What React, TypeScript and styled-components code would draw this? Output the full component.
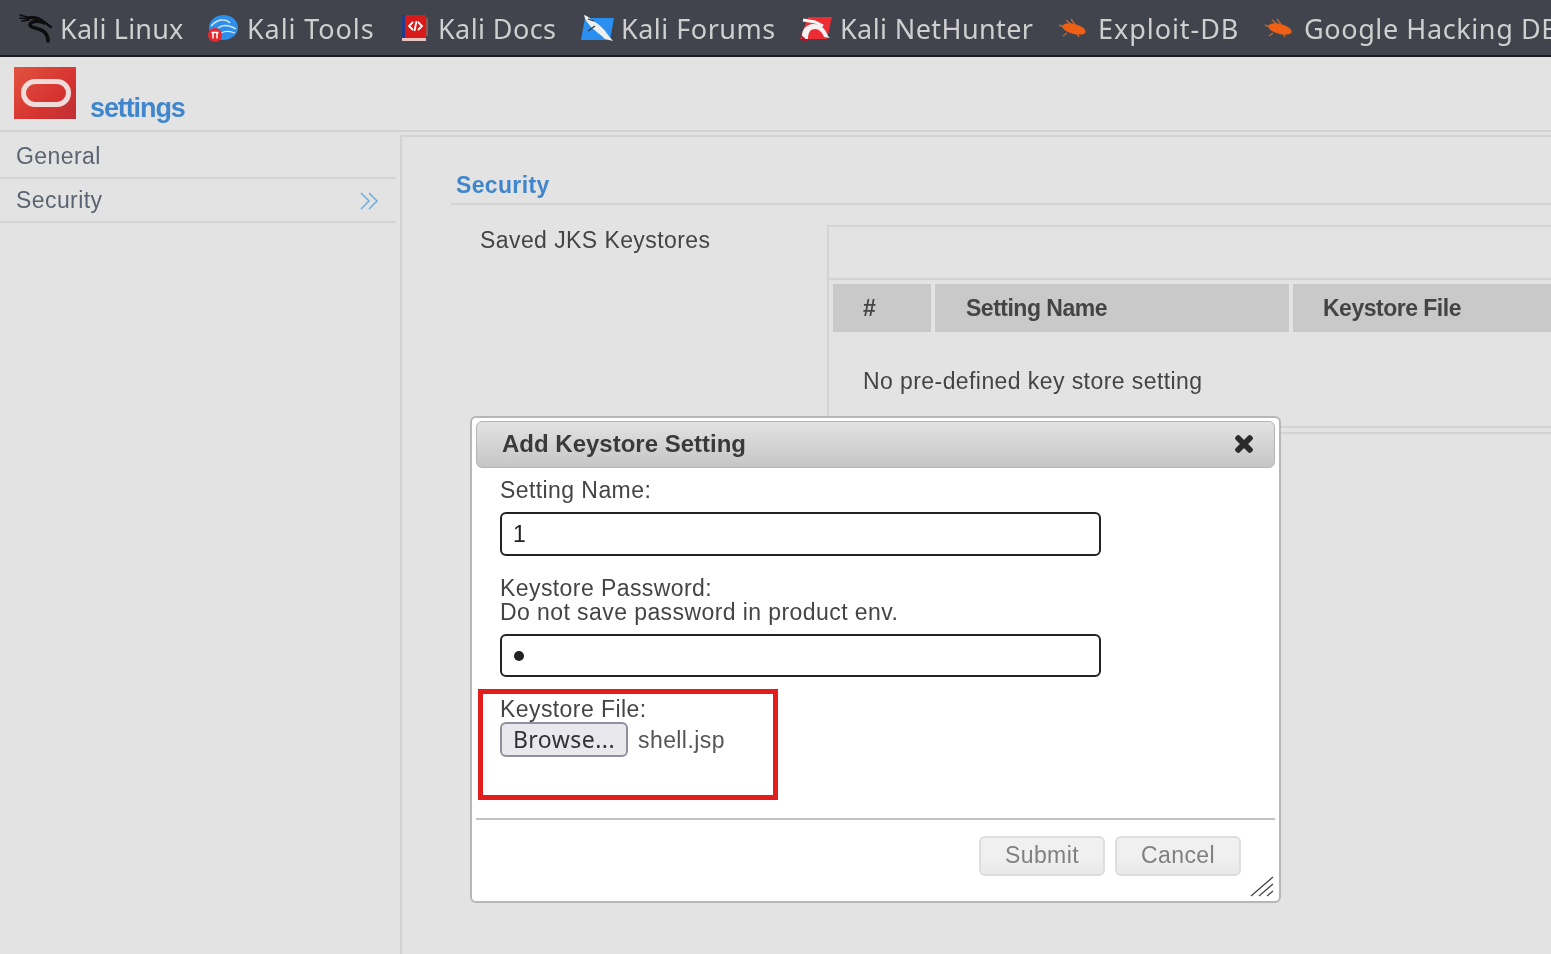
import React from "react";
import styled, { createGlobalStyle } from "styled-components";
import { FaTimes } from "react-icons/fa";

const Global = createGlobalStyle`
  html, body { margin: 0; padding: 0; height: 100%; background: #e3e3e3; overflow: hidden; }
  #root { height: 100%; }
  * { box-sizing: border-box; }
`;

const Page = styled.div`
  position: relative;
  width: 1551px;
  height: 954px;
  overflow: hidden;
  display: flex;
  flex-direction: column;
  background: #e3e3e3;
  font-family: "Liberation Sans", Arial, sans-serif;
  font-size: 23px;
  letter-spacing: 0.42px;
  color: #444;
  filter: blur(0.7px);
`;

const Toolbar = styled.nav`
  height: 57px;
  flex: none;
  display: flex;
  align-items: center;
  padding: 1px 0 0 19px;
  background: #41444c;
  border-bottom: 2px solid #1c1d21;
  white-space: nowrap;
`;

const Bookmark = styled.a<{ $gap: number; $track: number; $w?: number }>`
  flex: none;
  display: flex;
  align-items: center;
  width: ${(p) => (p.$w ? `${p.$w}px` : "auto")};
  gap: ${(p) => p.$gap}px;
  font-family: "Noto Sans", "Open Sans", sans-serif;
  font-size: 27px;
  letter-spacing: ${(p) => p.$track}px;
  color: #cfcfcf;
`;

const Header = styled.header`
  height: 75px;
  flex: none;
  display: flex;
  align-items: flex-end;
  gap: 14px;
  padding: 0 0 7px 14px;
  border-bottom: 2px solid #d3d3d3;
`;

const Logo = styled.div`
  width: 62px;
  height: 52px;
  display: flex;
  align-items: center;
  justify-content: center;
  margin-bottom: 4px;
  background: linear-gradient(135deg, #e2533f 0%, #d63431 60%, #bf2f33 100%);
`;

const LogoOval = styled.div`
  width: 50px;
  height: 28px;
  margin-top: -1px;
  margin-left: 1px;
  border: 5px solid #efdcd8;
  border-radius: 15px;
`;

const AppTitle = styled.div`
  font-size: 27px;
  line-height: 30px;
  font-weight: 700;
  letter-spacing: -1.1px;
  color: #3f86cc;
`;

const Body = styled.div`
  flex: 1;
  display: flex;
  min-height: 0;
`;

const Sidebar = styled.aside`
  width: 396px;
  flex: none;
  margin-right: 4px;
`;

const NavRow = styled.div<{ $h: number; $pt: number }>`
  height: ${(p) => p.$h}px;
  display: flex;
  align-items: center;
  justify-content: space-between;
  padding: ${(p) => p.$pt}px 16px 0 16px;
  border-bottom: 2px solid #d3d3d3;
  color: #5b6472;
`;

const Content = styled.main`
  flex: 1;
  margin-top: 3px;
  padding: 24px 0 0 49px;
  border-left: 2px solid #d3d3d3;
  border-top: 2px solid #d3d3d3;
  min-width: 0;
`;

const SectionTitle = styled.h2`
  margin: 0;
  height: 44px;
  padding: 0 0 0 5px;
  line-height: 48px;
  font-size: 23px;
  font-weight: 700;
  letter-spacing: 0.35px;
  color: #3f86cc;
  border-bottom: 2px solid #d3d3d3;
`;

const FormRow = styled.div`
  display: flex;
  padding-top: 20px;
`;

const FieldLabel = styled.div`
  width: 376px;
  flex: none;
  padding: 2px 0 0 29px;
  line-height: 26px;
  color: #444;
`;

const TableBox = styled.div`
  flex: 1;
  height: 203px;
  border-left: 2px solid #d3d3d3;
  border-top: 2px solid #d3d3d3;
  border-bottom: 2px solid #d3d3d3;
  box-shadow: 0 4px 0 #e3e3e3, 0 6px 0 #d3d3d3;
`;

const TableCaption = styled.div`
  height: 53px;
  border-bottom: 2px solid #d3d3d3;
`;

const HeadRow = styled.div`
  display: grid;
  grid-template-columns: 98px 354px 1fr;
  gap: 4px;
  height: 48px;
  margin: 4px 0 0 4px;
`;

const HeadCell = styled.div<{ $pl: number }>`
  display: flex;
  align-items: center;
  padding-left: ${(p) => p.$pl}px;
  background: #c9c9c9;
  font-weight: 700;
  letter-spacing: -0.5px;
  color: #444;
`;

const EmptyText = styled.div`
  padding: 36px 0 0 34px;
  line-height: 26px;
  color: #444;
`;

const Modal = styled.section`
  position: absolute;
  left: 470px;
  top: 416px;
  width: 811px;
  height: 487px;
  display: flex;
  flex-direction: column;
  padding: 3px 4px 0;
  background: #fff;
  border: 2px solid #b7b7b7;
  border-radius: 6px;
`;

const ModalBar = styled.div`
  height: 47px;
  flex: none;
  display: flex;
  align-items: center;
  justify-content: space-between;
  padding: 0 18px 2px 25px;
  background: linear-gradient(#e2e2e2, #c6c6c6);
  border: 1px solid #b4b4b4;
  border-radius: 6px;
  font-size: 24px;
  font-weight: 700;
  letter-spacing: 0;
  color: #3a3a3a;
`;

const CloseGlyph = styled(FaTimes)`
  width: 24px;
  height: 24px;
  color: #2b2b2b;
  stroke: #2b2b2b;
  stroke-width: 30px;
`;

const ModalForm = styled.div`
  flex: 1;
  padding: 10px 0 0 24px;
  line-height: 24px;
  color: #444;
`;

const TextField = styled.div<{ $mt: number; $h: number }>`
  width: 601px;
  height: ${(p) => p.$h}px;
  margin-top: ${(p) => p.$mt}px;
  display: flex;
  align-items: center;
  padding-left: 11px;
  border: 2px solid #222;
  border-radius: 6px;
  color: #222;
`;

const Bullet = styled.span`
  width: 10px;
  height: 10px;
  border-radius: 50%;
  background: #222;
  margin-left: 1px;
`;

const LabelBlock = styled.div<{ $mt: number }>`
  margin-top: ${(p) => p.$mt}px;
`;

const FileRow = styled.div`
  display: flex;
  align-items: center;
  gap: 10px;
  margin-top: 1px;
`;

const BrowseButton = styled.div`
  width: 128px;
  height: 35px;
  display: flex;
  align-items: center;
  justify-content: center;
  padding-bottom: 1px;
  background: #e9e9ed;
  border: 2px solid #8f8f9d;
  border-radius: 6px;
  font-family: "Noto Sans", sans-serif;
  font-size: 23px;
  letter-spacing: 0.45px;
  color: #333;
`;

const FileName = styled.span`
  color: #555;
`;

const Footer = styled.div`
  position: relative;
  height: 83px;
  flex: none;
  display: flex;
  justify-content: flex-end;
  gap: 10px;
  padding: 16px 34px 0 0;
  border-top: 2px solid #c2c2c2;
`;

const FootButton = styled.div`
  width: 126px;
  height: 40px;
  display: flex;
  align-items: center;
  justify-content: center;
  padding-bottom: 2px;
  background: linear-gradient(#f0f0f0 50%, #e9e9e9);
  border: 2px solid #dedede;
  border-radius: 6px;
  color: #808080;
`;

const ResizeGrip = styled.svg`
  position: absolute;
  right: 1px;
  bottom: 4px;
  width: 24px;
  height: 21px;
`;

const RedFrame = styled.div`
  position: absolute;
  left: 6px;
  top: 271px;
  width: 300px;
  height: 111px;
  border: 5px solid #e31c1c;
`;

const KaliIcon = () => (
  <svg width="33" height="30" viewBox="0 0 33 30" fill="none" stroke="#0d0d0d" strokeLinecap="round">
    <path d="M1 2l10 3M1 5l9 1M3 8l7-1" strokeWidth="1.7" />
    <path d="M8 5c7-1 13 0 17 5" strokeWidth="3.2" />
    <path d="M23 9c-6-2-12 0-12 3 0 3 8 3 13 6 3 2 5 5 5 10" strokeWidth="3.6" />
    <path d="M25 9l7 5" strokeWidth="2.2" />
  </svg>
);

const ToolsIcon = () => (
  <svg width="30" height="28" viewBox="0 0 30 28">
    <ellipse cx="15.5" cy="13.5" rx="14.5" ry="12.5" fill="#2f8ee8" />
    <path d="M3 12c7-8 15-7 19-3M10 14c5-4 11-3 18 1M13 19c4-2 9-2 14 0" stroke="#d5ecff" strokeWidth="1.3" fill="none" />
    <circle cx="7" cy="21" r="7" fill="#e8262b" />
    <path d="M3.5 18.5h7M5 18.5v6M9 18.5v6" stroke="#fff" strokeWidth="1.5" />
  </svg>
);

const DocsIcon = () => (
  <svg width="27" height="28" viewBox="0 0 27 28">
    <rect x="1" y="1" width="3" height="25" fill="#1f3d8c" />
    <rect x="4" y="1" width="21" height="23" fill="#d81a1a" />
    <rect x="25" y="4" width="2" height="18" fill="#8a5a4a" />
    <rect x="1" y="24" width="24" height="3" fill="#e8c5c0" />
    <path d="M12 8l-4 4 4 4M17 8l4 4-4 4M15.5 7l-2 10" stroke="#fff" strokeWidth="1.8" fill="none" />
  </svg>
);

const ForumsIcon = () => (
  <svg width="33" height="27" viewBox="0 0 33 27">
    <path d="M4 3h29l-4 22H0z" fill="#2a8ff0" />
    <path d="M3 0c4 1 6 4 11 7 5 3 9 7 13 13l5 6-8-2c-5-5-10-8-14-12C8 9 4 6 3 0z" fill="#eef0ef" />
    <path d="M7 4l6 2M14 11l-7 5" stroke="#333" strokeWidth="1.3" />
  </svg>
);

const HunterIcon = () => (
  <svg width="32" height="28" viewBox="0 0 32 28">
    <path d="M8 3l24 0-5 22H0z" fill="#ee2c33" />
    <path d="M2 25c-1-8 3-15 12-15 6 0 11 4 14 12l2 2-6-1c-2-5-5-8-9-8-5 0-7 4-7 10z" fill="#f2f2f2" />
    <path d="M3 6l12 2 8 4" stroke="#f4f4f4" strokeWidth="3" fill="none" />
    <path d="M0 20l3 7h5z" fill="#b3122c" />
  </svg>
);

const BugIcon = () => (
  <svg width="31" height="22" viewBox="0 0 31 22">
    <path d="M9 3l7 6M14 2l5 7M10 16l-4 3M20 16l2 4M2 8l7 3" stroke="#b8673a" strokeWidth="1.5" />
    <ellipse cx="17" cy="12" rx="12" ry="5" transform="rotate(15 17 12)" fill="#ef5f14" />
  </svg>
);

const Chevrons = () => (
  <svg width="20" height="18" viewBox="0 0 20 18" fill="none" stroke="#6fb0e0" strokeWidth="1.6">
    <path d="M1 1l8 8-8 8M9 1l8 8-8 8" />
  </svg>
);

export default function App() {
  return (
    <Page>
      <Global />
      <Toolbar>
        <Bookmark $gap={8} $track={0.2} $w={189}><KaliIcon />Kali Linux</Bookmark>
        <Bookmark $gap={9} $track={0.9} $w={193}><ToolsIcon />Kali Tools</Bookmark>
        <Bookmark $gap={10} $track={0.4} $w={180}><DocsIcon />Kali Docs</Bookmark>
        <Bookmark $gap={7} $track={0.5} $w={219}><ForumsIcon />Kali Forums</Bookmark>
        <Bookmark $gap={8} $track={0.4} $w={257}><HunterIcon />Kali NetHunter</Bookmark>
        <Bookmark $gap={10} $track={0.95} $w={206}><BugIcon />Exploit-DB</Bookmark>
        <Bookmark $gap={10} $track={0.6}><BugIcon />Google Hacking DB</Bookmark>
      </Toolbar>
      <Header>
        <Logo><LogoOval /></Logo>
        <AppTitle>settings</AppTitle>
      </Header>
      <Body>
        <Sidebar>
          <NavRow $h={47} $pt={3}>General</NavRow>
          <NavRow $h={44} $pt={1}>Security<Chevrons /></NavRow>
        </Sidebar>
        <Content>
          <SectionTitle>Security</SectionTitle>
          <FormRow>
            <FieldLabel>Saved JKS Keystores</FieldLabel>
            <TableBox>
              <TableCaption />
              <HeadRow>
                <HeadCell $pl={30}>#</HeadCell>
                <HeadCell $pl={31}>Setting Name</HeadCell>
                <HeadCell $pl={30}>Keystore File</HeadCell>
              </HeadRow>
              <EmptyText>No pre-defined key store setting</EmptyText>
            </TableBox>
          </FormRow>
        </Content>
      </Body>
      <Modal>
        <ModalBar>
          Add Keystore Setting
          <CloseGlyph />
        </ModalBar>
        <ModalForm>
          <div>Setting Name:</div>
          <TextField $mt={10} $h={44}>1</TextField>
          <LabelBlock $mt={20}>
            Keystore Password:
            <br />
            Do not save password in product env.
          </LabelBlock>
          <TextField $mt={10} $h={43}><Bullet /></TextField>
          <LabelBlock $mt={20}>Keystore File:</LabelBlock>
          <FileRow>
            <BrowseButton>Browse...</BrowseButton>
            <FileName>shell.jsp</FileName>
          </FileRow>
        </ModalForm>
        <Footer>
          <FootButton>Submit</FootButton>
          <FootButton>Cancel</FootButton>
          <ResizeGrip viewBox="0 0 24 21" fill="none" stroke="#444" strokeWidth="1.3">
            <path d="M1 20L23 1M9 20L23 8M17 20l6-5" />
          </ResizeGrip>
        </Footer>
        <RedFrame />
      </Modal>
    </Page>
  );
}
